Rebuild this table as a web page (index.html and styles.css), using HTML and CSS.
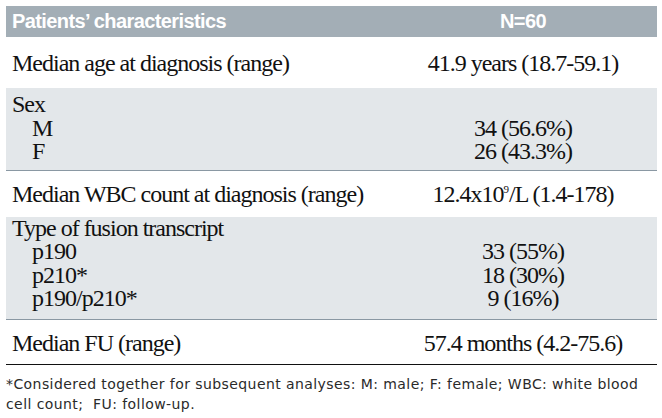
FILE: index.html
```html
<!DOCTYPE html>
<html>
<head>
<meta charset="utf-8">
<link rel="stylesheet" href="styles.css">
</head>
<body>
<div class="wrap">
<table class="tbl">
  <thead>
    <tr class="head">
      <th class="c1">Patients’ characteristics</th>
      <th class="c2">N=60</th>
    </tr>
  </thead>
  <tbody>
    <tr class="single age">
      <td class="c1">Median age at diagnosis (range)</td>
      <td class="c2">41.9 years (18.7-59.1)</td>
    </tr>
    <tr class="grp first sex">
      <td class="c1">Sex</td>
      <td class="c2"></td>
    </tr>
    <tr class="grp">
      <td class="c1 sub">M</td>
      <td class="c2">34 (56.6%)</td>
    </tr>
    <tr class="grp last sexl">
      <td class="c1 sub">F</td>
      <td class="c2">26 (43.3%)</td>
    </tr>
    <tr class="single wbc">
      <td class="c1">Median WBC count at diagnosis (range)</td>
      <td class="c2">12.4x10<sup>9</sup>/L (1.4-178)</td>
    </tr>
    <tr class="grp first type">
      <td class="c1">Type of fusion transcript</td>
      <td class="c2"></td>
    </tr>
    <tr class="grp">
      <td class="c1 sub">p190</td>
      <td class="c2">33 (55%)</td>
    </tr>
    <tr class="grp">
      <td class="c1 sub">p210*</td>
      <td class="c2">18 (30%)</td>
    </tr>
    <tr class="grp last typel">
      <td class="c1 sub">p190/p210*</td>
      <td class="c2">9 (16%)</td>
    </tr>
    <tr class="single fu">
      <td class="c1">Median FU (range)</td>
      <td class="c2">57.4 months (4.2-75.6)</td>
    </tr>
  </tbody>
</table>
<p class="note">*Considered together for subsequent analyses: M: male; F: female; WBC: white blood<br>cell count;&nbsp; FU: follow-up.</p>
</div>
</body>
</html>
```
FILE: styles.css
```css
html, body {
  margin: 0;
  padding: 0;
  background: #ffffff;
}
.wrap {
  padding: 6px 5px 0 6px;
}
.tbl {
  width: 651px;
  border-collapse: collapse;
  font-family: "Liberation Serif", "Times New Roman", serif;
  font-size: 24px;
  letter-spacing: -1px;
  color: #111;
}
.tbl th, .tbl td {
  padding: 0;
  white-space: nowrap;
}
.c1 {
  width: 357px;
  text-align: left;
  padding-left: 6px !important;
}
.c2 {
  text-align: center;
}
.head th {
  background: #a3aeb6;
  color: #fff;
  height: 31px;
  font-family: "Liberation Sans", Arial, sans-serif;
  font-weight: bold;
  font-size: 20px;
  letter-spacing: -0.6px;
  line-height: 31px;
}
.single td {
  line-height: 24px;
}
.age td {
  height: 51px;
}
.wbc td {
  height: 46px;
}
.fu td {
  height: 42px;
  padding-top: 2px;
  border-bottom: 1px solid #111;
  vertical-align: middle;
}
.grp td {
  background: #e3e7ea;
  line-height: 23.5px;
  height: 23.5px;
}
.sex td {
  padding-top: 5px;
}
.sexl td {
  padding-bottom: 6px;
  border-bottom: 1px solid #8a98a3;
}
.type td {
  padding-top: 0;
}
.typel td {
  padding-bottom: 8px;
  border-bottom: 1px solid #8a98a3;
}
.sub {
  padding-left: 26px !important;
}
sup {
  font-size: 11px;
  line-height: 0;
  vertical-align: 9px;
  letter-spacing: 0;
}
.note {
  margin: 9px 0 0 0;
  width: 651px;
  font-family: "DejaVu Sans", "Liberation Sans", sans-serif;
  font-size: 14px;
  line-height: 20px;
  letter-spacing: 0.42px;
  color: #2a2a2a;
}
```
